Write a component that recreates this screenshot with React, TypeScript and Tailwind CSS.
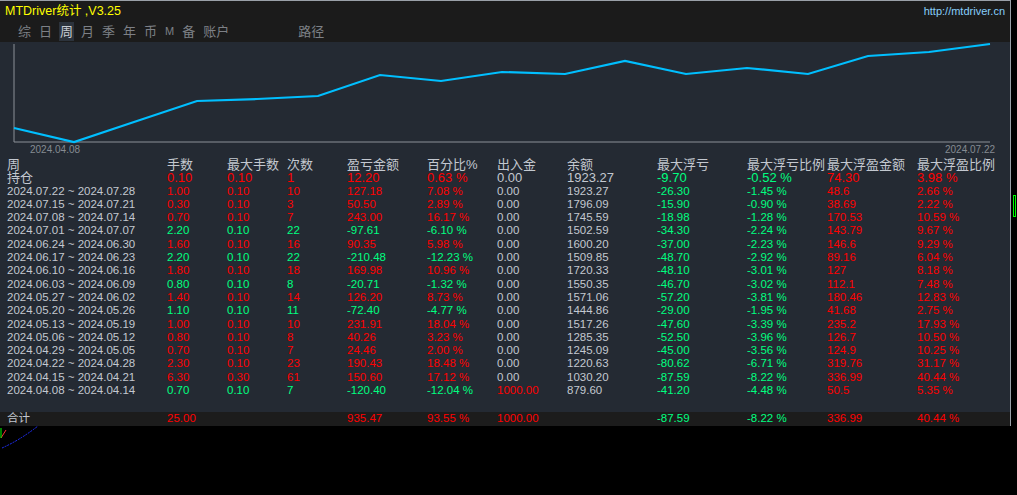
import React from 'react';

const R = 'text-[#ff0000]';
const G = 'text-[#00ff80]';
const W = 'text-[#c3c8d0]';

type Row = { c: string[]; col: string[] };

const cols = [7, 167, 227, 287, 347, 427, 497, 567, 657, 747, 827, 917];

const raw: [string, string, string, string, string, string, string, string, string, string, string, string, boolean][] = [
  ['持仓', '0.10', '0.10', '1', '12.20', '0.63 %', '0.00', '1923.27', '-9.70', '-0.52 %', '74.30', '3.98 %', true],
  ['2024.07.22 ~ 2024.07.28', '1.00', '0.10', '10', '127.18', '7.08 %', '0.00', '1923.27', '-26.30', '-1.45 %', '48.6', '2.66 %', true],
  ['2024.07.15 ~ 2024.07.21', '0.30', '0.10', '3', '50.50', '2.89 %', '0.00', '1796.09', '-15.90', '-0.90 %', '38.69', '2.22 %', true],
  ['2024.07.08 ~ 2024.07.14', '0.70', '0.10', '7', '243.00', '16.17 %', '0.00', '1745.59', '-18.98', '-1.28 %', '170.53', '10.59 %', true],
  ['2024.07.01 ~ 2024.07.07', '2.20', '0.10', '22', '-97.61', '-6.10 %', '0.00', '1502.59', '-34.30', '-2.24 %', '143.79', '9.67 %', false],
  ['2024.06.24 ~ 2024.06.30', '1.60', '0.10', '16', '90.35', '5.98 %', '0.00', '1600.20', '-37.00', '-2.23 %', '146.6', '9.29 %', true],
  ['2024.06.17 ~ 2024.06.23', '2.20', '0.10', '22', '-210.48', '-12.23 %', '0.00', '1509.85', '-48.70', '-2.92 %', '89.16', '6.04 %', false],
  ['2024.06.10 ~ 2024.06.16', '1.80', '0.10', '18', '169.98', '10.96 %', '0.00', '1720.33', '-48.10', '-3.01 %', '127', '8.18 %', true],
  ['2024.06.03 ~ 2024.06.09', '0.80', '0.10', '8', '-20.71', '-1.32 %', '0.00', '1550.35', '-46.70', '-3.02 %', '112.1', '7.48 %', false],
  ['2024.05.27 ~ 2024.06.02', '1.40', '0.10', '14', '126.20', '8.73 %', '0.00', '1571.06', '-57.20', '-3.81 %', '180.46', '12.83 %', true],
  ['2024.05.20 ~ 2024.05.26', '1.10', '0.10', '11', '-72.40', '-4.77 %', '0.00', '1444.86', '-29.00', '-1.95 %', '41.68', '2.75 %', false],
  ['2024.05.13 ~ 2024.05.19', '1.00', '0.10', '10', '231.91', '18.04 %', '0.00', '1517.26', '-47.60', '-3.39 %', '235.2', '17.93 %', true],
  ['2024.05.06 ~ 2024.05.12', '0.80', '0.10', '8', '40.26', '3.23 %', '0.00', '1285.35', '-52.50', '-3.96 %', '126.7', '10.50 %', true],
  ['2024.04.29 ~ 2024.05.05', '0.70', '0.10', '7', '24.46', '2.00 %', '0.00', '1245.09', '-45.00', '-3.56 %', '124.9', '10.25 %', true],
  ['2024.04.22 ~ 2024.04.28', '2.30', '0.10', '23', '190.43', '18.48 %', '0.00', '1220.63', '-80.62', '-6.71 %', '319.76', '31.17 %', true],
  ['2024.04.15 ~ 2024.04.21', '6.30', '0.30', '61', '150.60', '17.12 %', '0.00', '1030.20', '-87.59', '-8.22 %', '336.99', '40.44 %', true],
];

const rows: Row[] = raw.map((r) => {
  const pc = r[12] ? R : G;
  return {
    c: r.slice(0, 12) as string[],
    col: [W, pc, pc, pc, pc, pc, W, W, G, G, R, R],
  };
});
rows.push({
  c: ['2024.04.08 ~ 2024.04.14', '0.70', '0.10', '7', '-120.40', '-12.04 %', '1000.00', '879.60', '-41.20', '-4.48 %', '50.5', '5.35 %'],
  col: [W, G, G, G, G, G, R, W, G, G, R, R],
});

const header = ['周', '手数', '最大手数', '次数', '盈亏金额', '百分比%', '出入金', '余额', '最大浮亏', '最大浮亏比例', '最大浮盈金额', '最大浮盈比例'];
const total = ['合计', '25.00', '', '', '935.47', '93.55 %', '1000.00', '', '-87.59', '-8.22 %', '336.99', '40.44 %'];
const totalCol = [W, R, R, R, R, R, R, W, G, G, R, R];

const pts = [
  [14, 86], [74, 100], [134, 80], [197, 59], [257, 57], [318, 54], [380, 33], [441, 39], [502, 30],
  [565, 32], [625, 19], [686, 32], [747, 26], [808, 32], [868, 14], [929, 10], [990, 2],
];

const Line = ({ cells, colors, big }: { cells: string[]; colors: string[]; big?: boolean }) => (
  <div className="relative h-[13.3px] leading-[13.3px]">
    {cells.map((t, i) => (
      <span
        key={i}
        className={`absolute top-0 whitespace-nowrap ${colors[i]} ${big ? 'text-[13px]' : 'text-[11.5px]'}`}
        style={{ left: cols[i] }}
      >
        {t}
      </span>
    ))}
  </div>
);

const tabs = ['综', '日', '周', '月', '季', '年', '币', 'M', '备', '账户'];

export default function App() {
  return (
    <div className="w-[1017px] h-[495px] bg-black overflow-hidden relative" style={{ fontFamily: '"Liberation Sans", "Noto Sans CJK SC", sans-serif' }}>
      <div className="w-[1011px] h-[426px] border-t border-r border-[#9aa0a8] flex flex-col">
        <div className="bg-[#1b1b1b] h-[41px] flex flex-col">
          <div className="flex justify-between items-center h-[20px] px-[5px]">
            <span className="text-[#ffff00] text-[12.5px]">MTDriver统计 ,V3.25</span>
            <span className="text-[#87cefa] text-[11px]">http://mtdriver.cn</span>
          </div>
          <div className="flex items-center h-[21px] pl-[17px] text-[13px] text-[#7d8086]">
            {tabs.map((t) => (
              <span key={t} className={`mr-[6px] px-[1px] ${t === '周' ? 'bg-[#2c333c] text-[#c8ccd2]' : ''} ${t === 'M' ? 'text-[11px]' : ''}`}>
                {t}
              </span>
            ))}
            <span className="ml-[62px]">路径</span>
          </div>
        </div>
        <div className="bg-[#242a33] flex-1 flex flex-col">
          <div className="relative h-[116px]">
            <svg width="1011" height="116" className="absolute left-0 top-0">
              <polyline points="14,2 14,100 990,100" fill="none" stroke="#8b9098" strokeWidth="1" />
              <polyline points={pts.map((p) => p.join(',')).join(' ')} fill="none" stroke="#00bfff" strokeWidth="2.2" />
            </svg>
            <span className="absolute left-[30px] top-[100px] text-[10px] text-[#858a92]">2024.04.08</span>
            <span className="absolute left-[945px] top-[100px] text-[10px] text-[#858a92]">2024.07.22</span>
          </div>
          <div className="flex flex-col">
            <Line cells={header} colors={Array(12).fill(W)} big />
            {rows.map((r, i) => (
              <Line key={i} cells={r.c} colors={r.col} big={i === 0} />
            ))}
          </div>
          <div className="mt-auto bg-[#1c1c1c] h-[14px]">
            <Line cells={total} colors={totalCol} big={false} />
          </div>
        </div>
      </div>
      <svg className="absolute left-0 top-[420px]" width="60" height="40">
        <path d="M2 28 Q20 20 38 6" fill="none" stroke="#2030ff" strokeWidth="1" strokeDasharray="2 1" />
        <path d="M1 18 L6 10" stroke="#ff3030" strokeWidth="1" />
        <path d="M1 8 L1 18" stroke="#00ff00" strokeWidth="1" />
      </svg>
      <div className="absolute left-[1013px] top-[195px] w-[3px] h-[22px] border border-[#00ff00]" />
    </div>
  );
}
